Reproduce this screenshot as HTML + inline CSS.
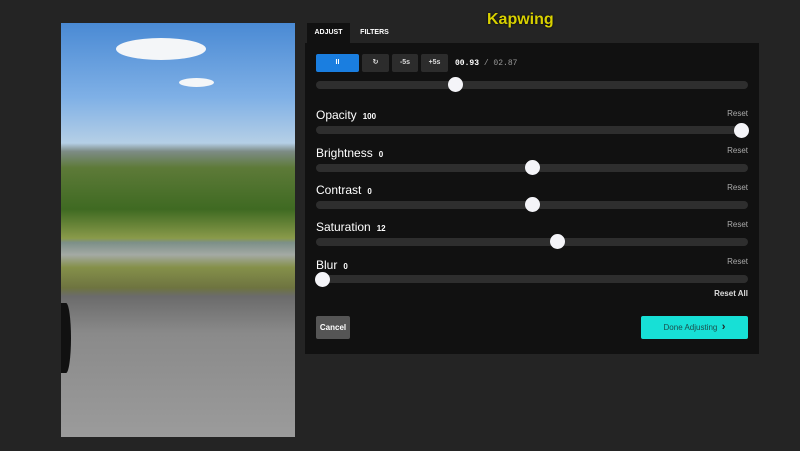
<!DOCTYPE html><html><head><style>
body{margin:0;width:800px;height:451px;background:#242424;position:relative;overflow:hidden;font-family:"Liberation Sans",sans-serif;}
.a{position:absolute}
.img{left:61px;top:23px;width:234px;height:414px;background:linear-gradient(180deg,#4a8ad4 0%,#7fb0e6 18%,#b5cfe6 29%,#7d8c86 31%,#5d7a38 35%,#3f6a22 45%,#8a9a4a 52%,#7c8f88 53%,#a4aaa4 56%,#85904a 59%,#6e7440 64%,#6b6b6b 66%,#8a8a8a 75%,#9b9b9b 100%);overflow:hidden}
.panel{left:305px;top:43px;width:454px;height:311px;background:#111;}
.tab{top:23px;height:20px;font-size:7px;font-weight:bold;color:#fff;line-height:20px;text-align:center}
.btn{top:54px;height:18px;background:#2c2c2c;border-radius:2px;color:#ddd;font-size:7px;font-weight:bold;text-align:center;line-height:18px}
.tr{left:316px;width:432px;height:8px;background:#2e2e2e;border-radius:4px}
.k{width:15px;height:15px;border-radius:50%;background:#f4f4f8}
.lb{left:316px;color:#fff;font-size:12px}
.lb b{font-size:8px;margin-left:6px}
.rs{right:52px;font-size:8px;color:#aaa}
.cl{position:absolute;background:#f4f6f8;border-radius:50%}
</style></head><body>
<div class="a img">
<div class="cl" style="left:55px;top:15px;width:90px;height:22px"></div>
<div class="cl" style="left:118px;top:55px;width:35px;height:9px"></div>
<div class="cl" style="left:0;top:280px;width:10px;height:70px;background:#111;border-radius:0 50% 50% 0"></div>
</div>
<div class="a" style="left:487px;top:11px;font-size:16px;font-weight:bold;color:#d8d000;text-shadow:0 0 2px #000">Kapwing</div>
<div class="a tab" style="left:307px;width:43px;background:#111">ADJUST</div>
<div class="a tab" style="left:352px;width:45px">FILTERS</div>
<div class="a panel"></div>
<div class="a btn" style="left:316px;width:43px;background:#1a7ee0;color:#fff">II</div>
<div class="a btn" style="left:362px;width:27px">↻</div>
<div class="a btn" style="left:392px;width:26px">-5s</div>
<div class="a btn" style="left:421px;width:27px">+5s</div>
<div class="a" style="left:455px;top:59px;font-family:'Liberation Mono',monospace;font-size:8px;color:#fff"><b>00.93</b> <span style="color:#999">/ 02.87</span></div>
<div class="a tr" style="top:81px"></div><div class="a k" style="left:448px;top:77px"></div>
<div class="a lb" style="top:108px">Opacity<b>100</b></div><div class="a rs" style="top:109px">Reset</div>
<div class="a tr" style="top:126px"></div><div class="a k" style="left:734px;top:123px"></div>
<div class="a lb" style="top:146px">Brightness<b>0</b></div><div class="a rs" style="top:146px">Reset</div>
<div class="a tr" style="top:164px"></div><div class="a k" style="left:525px;top:160px"></div>
<div class="a lb" style="top:183px">Contrast<b>0</b></div><div class="a rs" style="top:183px">Reset</div>
<div class="a tr" style="top:201px"></div><div class="a k" style="left:525px;top:197px"></div>
<div class="a lb" style="top:220px">Saturation<b>12</b></div><div class="a rs" style="top:220px">Reset</div>
<div class="a tr" style="top:238px"></div><div class="a k" style="left:550px;top:234px"></div>
<div class="a lb" style="top:258px">Blur<b>0</b></div><div class="a rs" style="top:257px">Reset</div>
<div class="a tr" style="top:275px"></div><div class="a k" style="left:315px;top:272px"></div>
<div class="a" style="right:52px;top:289px;font-size:8px;font-weight:bold;color:#ddd">Reset All</div>
<div class="a" style="left:316px;top:316px;width:34px;height:23px;background:#555;border-radius:2px;color:#fff;font-size:8px;font-weight:bold;text-align:center;line-height:23px">Cancel</div>
<div class="a" style="left:641px;top:316px;width:107px;height:23px;background:#17e0d6;border-radius:2px;font-size:8px;text-align:center;line-height:23px;color:#1b4f4d">Done Adjusting &nbsp;<b style="color:#222;font-size:11px">›</b></div>
</body></html>
